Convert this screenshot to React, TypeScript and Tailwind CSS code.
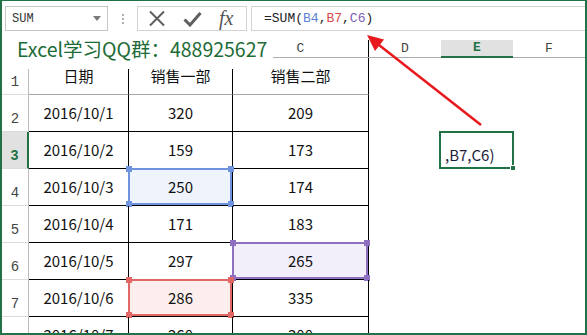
import React from "react";

const rows: [string, string, string][] = [
  ["日期", "销售一部", "销售二部"],
  ["2016/10/1", "320", "209"],
  ["2016/10/2", "159", "173"],
  ["2016/10/3", "250", "174"],
  ["2016/10/4", "171", "183"],
  ["2016/10/5", "297", "265"],
  ["2016/10/6", "286", "335"],
  ["2016/10/7", "260", "300"],
];

type Sel = { border: string; fill: string; handle: string };
const blue: Sel = { border: "border-[#6f93dc]", fill: "bg-[#eef3fc]", handle: "bg-[#6f93dc]" };
const red: Sel = { border: "border-[#e26767]", fill: "bg-[#fdeeee]", handle: "bg-[#e26767]" };
const purple: Sel = { border: "border-[#8e6fc1]", fill: "bg-[#f2eefa]", handle: "bg-[#8e6fc1]" };

function Selection({ s }: { s: Sel }) {
  return (
    <div className={`absolute -left-px -top-px right-0 bottom-0 border-2 ${s.border} ${s.fill} z-0`}>
      <div className={`absolute -left-[4px] -top-[4px] w-[6px] h-[6px] ${s.handle}`} />
      <div className={`absolute -right-[4px] -top-[4px] w-[6px] h-[6px] ${s.handle}`} />
      <div className={`absolute -left-[4px] -bottom-[4px] w-[6px] h-[6px] ${s.handle}`} />
      <div className={`absolute -right-[4px] -bottom-[4px] w-[6px] h-[6px] ${s.handle}`} />
    </div>
  );
}

const dataFont = { fontFamily: '"Noto Sans CJK SC", "Noto Sans", sans-serif' };
const monoFont = { fontFamily: '"Liberation Mono", "DejaVu Sans Mono", monospace' };

function DataCell({
  text,
  width,
  header,
  sel,
}: {
  text: string;
  width: string;
  header: boolean;
  sel?: Sel;
}) {
  return (
    <div
      className={`relative ${width} h-full flex items-center justify-center border-r border-black ${
        header ? "border-b border-b-[#a6a6a6]" : "border-b border-b-black"
      }`}
    >
      {sel && <Selection s={sel} />}
      <span className="relative z-10 text-[15px] text-[#111]" style={dataFont}>
        {text}
      </span>
    </div>
  );
}

export default function App() {
  return (
    <div className="relative w-[587px] h-[335px] overflow-hidden bg-white border-t border-l-2 border-r-2 border-b-2 border-[#217346]">
      {/* formula bar */}
      <div className="h-[39px] flex items-start pt-[5px] pl-[3px]">
        <div className="w-[103px] h-[25px] border border-[#c6c6c6] flex items-center justify-between pl-[6px] pr-[6px]">
          <span className="text-[12px] text-[#333]" style={monoFont}>
            SUM
          </span>
          <svg width="8" height="5" viewBox="0 0 8 5">
            <path d="M0 0 L8 0 L4 5 Z" fill="#7a7a7a" />
          </svg>
        </div>
        <div className="w-[29px] h-[25px] flex flex-col items-center justify-center gap-[2px]">
          <div className="w-[2px] h-[2px] bg-[#b0b0b0]" />
          <div className="w-[2px] h-[2px] bg-[#b0b0b0]" />
          <div className="w-[2px] h-[2px] bg-[#b0b0b0]" />
        </div>
        <div className="w-[110px] h-[25px] border border-[#d4d4d4] flex items-center pl-[10px] gap-[17px]">
          <svg width="18" height="17" viewBox="0 0 18 17">
            <path d="M2 1.5 L16 15.5 M16 1.5 L2 15.5" stroke="#5e5e5e" strokeWidth="2" />
          </svg>
          <svg width="19" height="16" viewBox="0 0 19 16">
            <path d="M1.5 8.5 L7 14 L17.5 2" stroke="#5e5e5e" strokeWidth="3" fill="none" />
          </svg>
          <span
            className="text-[20px] italic text-[#555] leading-none -mt-[2px]"
            style={{ fontFamily: '"Liberation Serif", "DejaVu Serif", serif' }}
          >
            fx
          </span>
        </div>
        <div className="ml-[4px] flex-1 h-[25px] border border-[#d4d4d4] border-r-0 flex items-center pl-[12px]">
          <span className="text-[13px] text-[#222]" style={monoFont}>
            =SUM(<span className="text-[#5b80d4]">B4</span>,<span className="text-[#d24b4b]">B7</span>,
            <span className="text-[#7d5db3]">C6</span>)
          </span>
        </div>
      </div>

      {/* column headers */}
      <div className="flex h-[18px] border-b border-[#ababab] text-[13px] text-[#444]" style={monoFont}>
        <div className="w-[27px]" />
        <div className="w-[100px]" />
        <div className="w-[104px]" />
        <div className="w-[136px] flex items-center justify-center border-r border-black">C</div>
        <div className="w-[72px] flex items-center justify-center">D</div>
        <div className="w-[72px] flex items-center justify-center bg-[#e1e1e1] text-[#217346] font-bold border-b-2 border-[#217346] -mb-px">
          E
        </div>
        <div className="w-[72px] flex items-center justify-center">F</div>
      </div>

      {/* rows */}
      {rows.map((r, i) => {
        const n = i + 1;
        const header = n === 1;
        const selRow = n === 3;
        return (
          <div key={n} className="flex h-[37px]">
            <div
              className={`w-[27px] h-full flex items-end justify-center pb-[1px] text-[14px] border-b border-b-[#dcdcdc] ${
                selRow
                  ? "bg-[#e1e1e1] text-[#217346] font-bold border-r-2 border-r-[#217346]"
                  : "text-[#444] border-r border-r-[#bcbcbc]"
              }`}
              style={monoFont}
            >
              {n}
            </div>
            <DataCell text={r[0]} width="w-[100px]" header={header} />
            <DataCell
              text={r[1]}
              width="w-[104px]"
              header={header}
              sel={n === 4 ? blue : n === 7 ? red : undefined}
            />
            <DataCell text={r[2]} width="w-[136px]" header={header} sel={n === 6 ? purple : undefined} />
            <div className="w-[72px] h-full" />
            <div className="relative w-[72px] h-full">
              {selRow && (
                <div className="absolute -left-[2px] -top-px right-[-1px] bottom-0 border-2 border-[#217346] flex items-end pl-[4px] pb-[2px] z-10 bg-white">
                  <span className="text-[15px] text-[#1c1c3c] leading-[20px]" style={dataFont}>
                    ,B7,C6)
                  </span>
                  <div className="absolute -right-[4px] -bottom-[4px] w-[6px] h-[6px] bg-[#217346] border border-white" />
                </div>
              )}
            </div>
            <div className="w-[72px] h-full" />
          </div>
        );
      })}

      {/* title overlay */}
      <div className="absolute left-0 top-[30px] w-[271px] h-[38px] bg-white z-20 pl-[15px] pt-[4px] overflow-hidden whitespace-nowrap">
        <span className="text-[19.5px] leading-[28px] text-[#1d6b36]" style={dataFont}>
          Excel学习QQ群：488925627
        </span>
      </div>

      {/* arrow */}
      <svg className="absolute left-[-2px] top-[-1px] z-30 pointer-events-none" width="587" height="335" viewBox="0 0 587 335">
        <line x1="481" y1="125" x2="379" y2="45" stroke="#e8191d" strokeWidth="2.5" />
        <path d="M367 35 L384 39.5 L375 51 Z" fill="#e8191d" />
      </svg>
    </div>
  );
}
